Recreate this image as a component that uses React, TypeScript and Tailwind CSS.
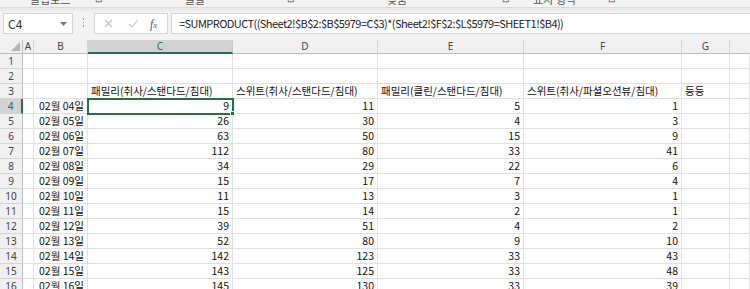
import React from "react";

const KR = "font-['Noto_Sans_CJK_KR','Noto_Sans',sans-serif]";

const rows: [string, number, number, number, number][] = [
  ["02월 04일", 9, 11, 5, 1],
  ["02월 05일", 26, 30, 4, 3],
  ["02월 06일", 63, 50, 15, 9],
  ["02월 07일", 112, 80, 33, 41],
  ["02월 08일", 34, 29, 22, 6],
  ["02월 09일", 15, 17, 7, 4],
  ["02월 10일", 11, 13, 3, 1],
  ["02월 11일", 15, 14, 2, 1],
  ["02월 12일", 39, 51, 4, 2],
  ["02월 13일", 52, 80, 9, 10],
  ["02월 14일", 142, 123, 33, 43],
  ["02월 15일", 143, 125, 33, 48],
  ["02월 16일", 145, 130, 33, 39],
];

const grid =
  "grid grid-cols-[23px_11px_54px_145px_145px_146px_158px_48px_1fr]";

function Cell({
  children,
  right = false,
  className = "",
}: {
  children?: React.ReactNode;
  right?: boolean;
  className?: string;
}) {
  return (
    <div
      className={`h-[15px] border-b border-r border-[#e1e1e1] px-[3px] text-[10.5px] leading-[14px] whitespace-nowrap text-[#111] ${
        right ? "text-right" : ""
      } ${className}`}
    >
      {children}
    </div>
  );
}

function RowHead({ n, active = false }: { n: number; active?: boolean }) {
  return (
    <div
      className={`h-[15px] border-b border-[#d4d4d4] text-center font-['Noto_Sans',sans-serif] text-[10px] leading-[14px] ${
        active
          ? "border-r-2 border-r-[#217346] bg-[#d2d2d2] text-[#217346]"
          : "border-r border-r-[#bdbdbd] bg-[#f0f0f0] text-[#444]"
      }`}
    >
      {n}
    </div>
  );
}

function ColHead({ l, active = false }: { l: string; active?: boolean }) {
  return (
    <div
      className={`h-[14px] border-r text-center font-['Noto_Sans',sans-serif] text-[10px] leading-[13px] ${
        active
          ? "border-b-2 border-b-[#217346] border-r-[#c6c6c6] bg-[#d2d2d2] text-[#217346]"
          : "border-b border-b-[#bdbdbd] border-r-[#d4d4d4] bg-[#f0f0f0] text-[#444]"
      }`}
    >
      {l}
    </div>
  );
}

export default function App() {
  return (
    <div className={`h-[289px] w-[750px] overflow-hidden bg-white ${KR}`}>
      {/* ribbon group labels, cut off at the top edge */}
      <div className="flex h-[7px] overflow-hidden bg-[#f3f3f3] text-[11px] leading-[12px] text-[#555]">
        <span className="w-[30px]" />
        <span className="mt-[-7px] w-[65px]">클립보드</span>
        <span className="mt-[-7px] w-[90px] text-[9px]">⊡</span>
        <span className="mt-[-7px] w-[102px]">글꼴</span>
        <span className="mt-[-7px] w-[100px] text-[9px]">⊡</span>
        <span className="mt-[-7px] w-[115px]">맞춤</span>
        <span className="mt-[-7px] w-[31px] text-[9px]">⊡</span>
        <span className="mt-[-7px] w-[75px]">표시 형식</span>
        <span className="mt-[-7px] text-[9px]">⊡</span>
      </div>
      <div className="h-[5px] border-t border-[#dadada] bg-gradient-to-b from-[#e4e4e4] to-[#f3f3f3]" />

      {/* formula bar */}
      <div className="flex h-[28px] items-start bg-[#f3f3f3] pt-[1px]">
        <div className="ml-[3px] flex h-[21px] w-[70px] items-center justify-between border border-[#d4d4d4] bg-white pl-[4px] pr-[5px] text-[12px] text-[#333]">
          <span>C4</span>
          <svg width="7" height="4" viewBox="0 0 7 4">
            <path d="M0 0h7L3.5 4z" fill="#777" />
          </svg>
        </div>
        <div className="flex w-[21px] flex-col items-center justify-center gap-[2px] pt-[5px]">
          <span className="h-[1.5px] w-[1.5px] bg-[#999]" />
          <span className="h-[1.5px] w-[1.5px] bg-[#999]" />
          <span className="h-[1.5px] w-[1.5px] bg-[#999]" />
        </div>
        <div className="flex h-[21px] w-[74px] items-center border border-[#d4d4d4] bg-white">
          <svg className="ml-[9px]" width="9" height="9" viewBox="0 0 9 9">
            <path d="M1 1l7 7M8 1L1 8" stroke="#c2c2c2" strokeWidth="1.1" />
          </svg>
          <svg className="ml-[15px]" width="11" height="9" viewBox="0 0 11 9">
            <path d="M1 5l3 3 6-7" stroke="#c2c2c2" strokeWidth="1.1" fill="none" />
          </svg>
          <span className="ml-[11px] font-['Liberation_Serif',serif] text-[12px] italic text-[#555]">
            f<span className="text-[9px]">x</span>
          </span>
        </div>
        <div className="ml-[3px] flex h-[21px] flex-1 items-center border border-r-0 border-[#d4d4d4] bg-white pl-[7px] text-[11px] tracking-[-0.55px] text-[#222]">
          =SUMPRODUCT((Sheet2!$B$2:$B$5979=C$3)*(Sheet2!$F$2:$L$5979=SHEET1!$B4))
        </div>
      </div>

      {/* sheet */}
      <div className={grid}>
        <div className="flex h-[14px] items-end justify-end border-b border-r border-[#bdbdbd] bg-[#f0f0f0] pb-[2px] pr-[2px]">
          <svg width="9" height="9" viewBox="0 0 9 9">
            <path d="M9 0v9H0z" fill="#b4b4b4" />
          </svg>
        </div>
        <ColHead l="A" />
        <ColHead l="B" />
        <ColHead l="C" active />
        <ColHead l="D" />
        <ColHead l="E" />
        <ColHead l="F" />
        <ColHead l="G" />
        <div className="h-[14px] border-b border-[#bdbdbd] bg-[#f0f0f0]" />

        {[1, 2].map((n) => (
          <React.Fragment key={n}>
            <RowHead n={n} />
            <Cell />
            <Cell />
            <Cell />
            <Cell />
            <Cell />
            <Cell />
            <Cell />
            <Cell />
          </React.Fragment>
        ))}

        <RowHead n={3} />
        <Cell />
        <Cell />
        <Cell>패밀리(취사/스탠다드/침대)</Cell>
        <Cell>스위트(취사/스탠다드/침대)</Cell>
        <Cell>패밀리(클린/스탠다드/침대)</Cell>
        <Cell>스위트(취사/파셜오션뷰/침대)</Cell>
        <Cell>등등</Cell>
        <Cell />

        {rows.map((r, i) => (
          <React.Fragment key={r[0]}>
            <RowHead n={i + 4} active={i === 0} />
            <Cell />
            <Cell right>{r[0]}</Cell>
            <Cell
              right
              className={
                i === 0
                  ? "relative outline-2 -outline-offset-1 outline-[#217346]"
                  : ""
              }
            >
              {r[1]}
              {i === 0 && (
                <span className="absolute -bottom-[3px] -right-[3px] h-[5px] w-[5px] border border-white bg-[#217346]" />
              )}
            </Cell>
            <Cell right>{r[2]}</Cell>
            <Cell right>{r[3]}</Cell>
            <Cell right>{r[4]}</Cell>
            <Cell />
            <Cell />
          </React.Fragment>
        ))}
      </div>
    </div>
  );
}
